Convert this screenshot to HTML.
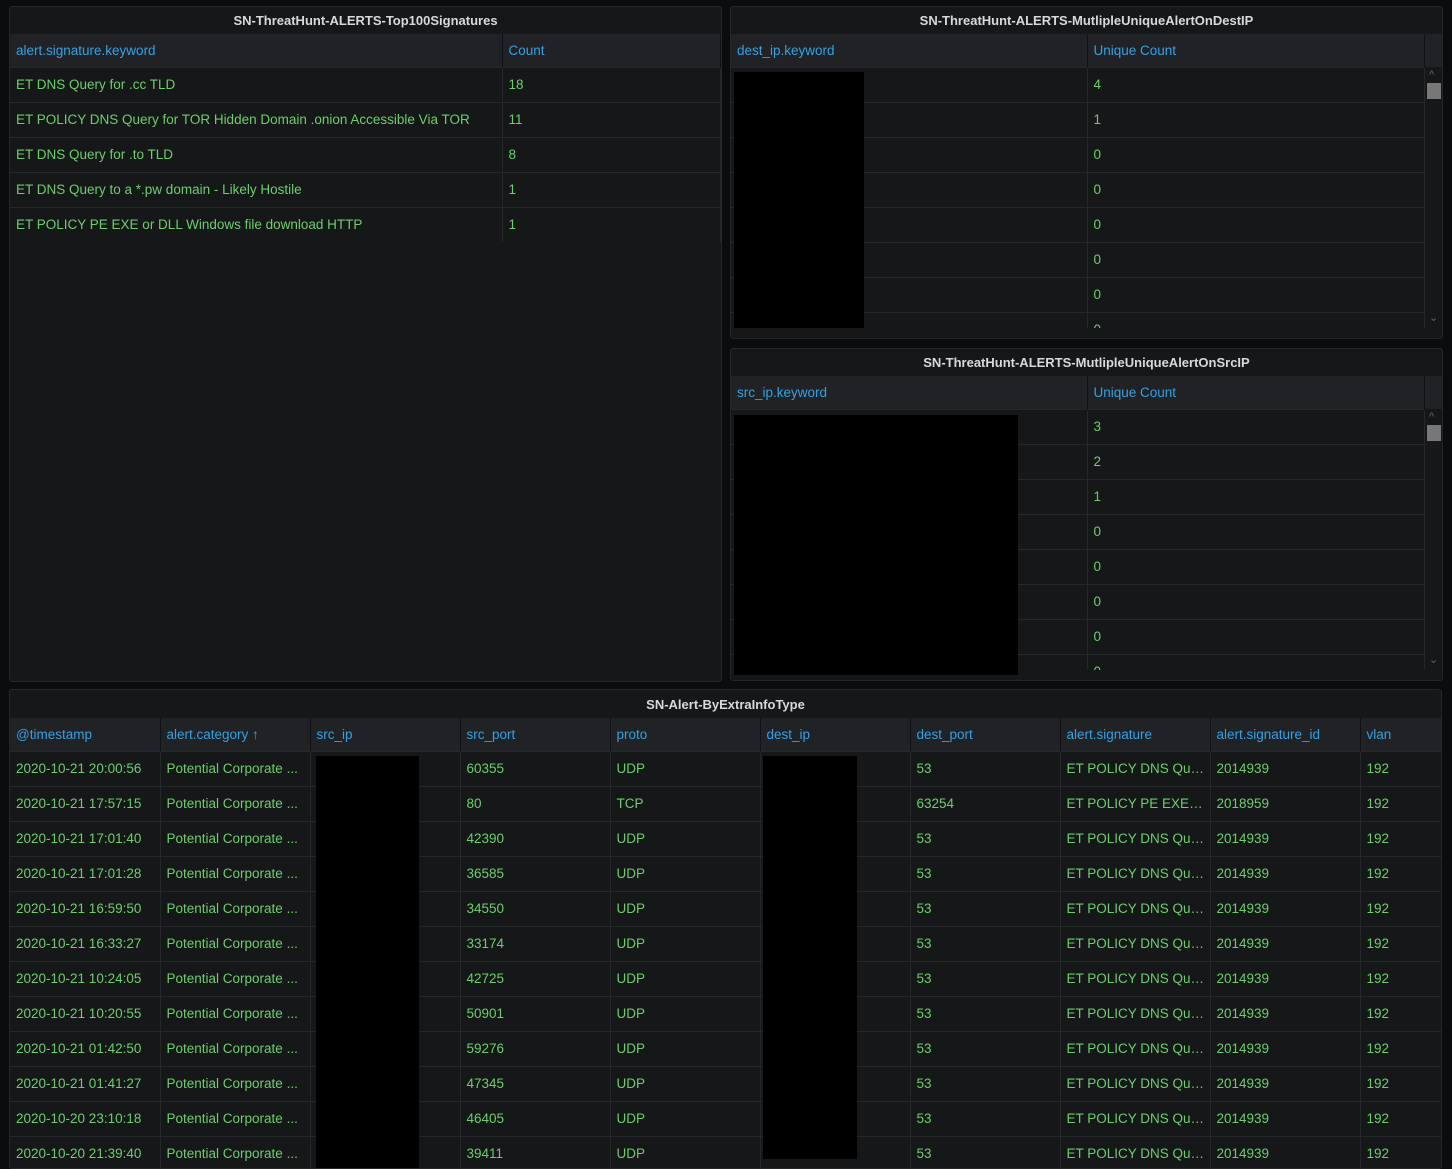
<!DOCTYPE html><html><head><style>
*{box-sizing:border-box;margin:0;padding:0}
body{width:1452px;height:1164px;background:#0b0c0e;font-family:"Liberation Sans",sans-serif;font-size:13.5px;overflow:hidden;position:relative}
.p{position:absolute;background:#181b1f;border:1px solid #25272b;border-radius:3px;overflow:hidden}
.t{height:27px;line-height:27px;text-align:center;color:#d8d9da;font-weight:bold;font-size:13px}
table{border-collapse:collapse;table-layout:fixed}
th{background:#202226;height:33px;padding-top:1px;text-align:left;font-weight:normal;color:#33a2e5;padding-left:6px;border-right:1px solid #111217}
td{height:35px;color:#6ccf6c;padding-left:6px;padding-right:4px;border-top:1px solid #25272b;border-right:1px solid #25272b;white-space:nowrap;overflow:hidden;text-overflow:ellipsis;background:#161719}
.blk{position:absolute;background:#000}
.sb{position:absolute;width:14px;background:#161719}
.up,.dn{position:absolute;color:#666;font-size:11px;left:3px}
.thumb{position:absolute;left:1px;top:14px;width:14px;height:16px;background:#777}
</style></head><body>

<div class="p" style="left:9px;top:6px;width:713px;height:676px;background:#161719">
<div class="t">SN-ThreatHunt-ALERTS-Top100Signatures</div>
<table style="width:711px"><colgroup><col style="width:492px"><col></colgroup>
<tr><th>alert.signature.keyword</th><th>Count</th></tr>
<tr><td>ET DNS Query for .cc TLD</td><td>18</td></tr>
<tr><td>ET POLICY DNS Query for TOR Hidden Domain .onion Accessible Via TOR</td><td>11</td></tr>
<tr><td>ET DNS Query for .to TLD</td><td>8</td></tr>
<tr><td>ET DNS Query to a *.pw domain - Likely Hostile</td><td>1</td></tr>
<tr><td>ET POLICY PE EXE or DLL Windows file download HTTP</td><td>1</td></tr>
</table></div>

<div class="p" style="left:730px;top:6px;width:713px;height:333px;background:#161719">
<div class="t">SN-ThreatHunt-ALERTS-MutlipleUniqueAlertOnDestIP</div>
<div style="position:absolute;left:0;top:27px;width:713px;height:33px;background:#202226"></div>
<table style="width:694px;position:relative"><colgroup><col style="width:356px"><col></colgroup>
<tr><th>dest_ip.keyword</th><th>Unique Count</th></tr>
<tr><td></td><td>4</td></tr><tr><td></td><td>1</td></tr><tr><td></td><td>0</td></tr><tr><td></td><td>0</td></tr><tr><td></td><td>0</td></tr><tr><td></td><td>0</td></tr><tr><td></td><td>0</td></tr><tr><td></td><td>0</td></tr>
</table>
<div style="position:absolute;left:0;top:321px;width:713px;height:20px;background:#161719"></div>
<div class="sb" style="left:695px;top:62px;height:260px"><span class="up">^</span><div class="thumb"></div><span class="dn" style="top:242px">⌄</span></div>
<div class="blk" style="left:3px;top:65px;width:130px;height:256px"></div>
</div>

<div class="p" style="left:730px;top:348px;width:713px;height:333px;background:#161719">
<div class="t">SN-ThreatHunt-ALERTS-MutlipleUniqueAlertOnSrcIP</div>
<div style="position:absolute;left:0;top:27px;width:713px;height:33px;background:#202226"></div>
<table style="width:694px;position:relative"><colgroup><col style="width:356px"><col></colgroup>
<tr><th>src_ip.keyword</th><th>Unique Count</th></tr>
<tr><td></td><td>3</td></tr><tr><td></td><td>2</td></tr><tr><td></td><td>1</td></tr><tr><td></td><td>0</td></tr><tr><td></td><td>0</td></tr><tr><td></td><td>0</td></tr><tr><td></td><td>0</td></tr><tr><td></td><td>0</td></tr>
</table>
<div style="position:absolute;left:0;top:321px;width:713px;height:20px;background:#161719"></div>
<div class="sb" style="left:695px;top:62px;height:260px"><span class="up">^</span><div class="thumb"></div><span class="dn" style="top:242px">⌄</span></div>
<div class="blk" style="left:3px;top:66px;width:284px;height:260px"></div>
</div>

<div class="p" style="left:9px;top:689px;width:1433px;height:480px;background:#161719">
<div class="t" style="height:28px;line-height:29px">SN-Alert-ByExtraInfoType</div>
<table style="width:1432px"><colgroup><col style="width:150px"><col style="width:150px"><col style="width:150px"><col style="width:150px"><col style="width:150px"><col style="width:150px"><col style="width:150px"><col style="width:150px"><col style="width:150px"><col></colgroup>
<tr><th>@timestamp</th><th>alert.category ↑</th><th>src_ip</th><th>src_port</th><th>proto</th><th>dest_ip</th><th>dest_port</th><th>alert.signature</th><th>alert.signature_id</th><th>vlan</th></tr>
<tr><td>2020-10-21 20:00:56</td><td>Potential Corporate ...</td><td></td><td>60355</td><td>UDP</td><td></td><td>53</td><td>ET POLICY DNS Query</td><td>2014939</td><td>192</td></tr>
<tr><td>2020-10-21 17:57:15</td><td>Potential Corporate ...</td><td></td><td>80</td><td>TCP</td><td></td><td>63254</td><td>ET POLICY PE EXE or DLL</td><td>2018959</td><td>192</td></tr>
<tr><td>2020-10-21 17:01:40</td><td>Potential Corporate ...</td><td></td><td>42390</td><td>UDP</td><td></td><td>53</td><td>ET POLICY DNS Query</td><td>2014939</td><td>192</td></tr>
<tr><td>2020-10-21 17:01:28</td><td>Potential Corporate ...</td><td></td><td>36585</td><td>UDP</td><td></td><td>53</td><td>ET POLICY DNS Query</td><td>2014939</td><td>192</td></tr>
<tr><td>2020-10-21 16:59:50</td><td>Potential Corporate ...</td><td></td><td>34550</td><td>UDP</td><td></td><td>53</td><td>ET POLICY DNS Query</td><td>2014939</td><td>192</td></tr>
<tr><td>2020-10-21 16:33:27</td><td>Potential Corporate ...</td><td></td><td>33174</td><td>UDP</td><td></td><td>53</td><td>ET POLICY DNS Query</td><td>2014939</td><td>192</td></tr>
<tr><td>2020-10-21 10:24:05</td><td>Potential Corporate ...</td><td></td><td>42725</td><td>UDP</td><td></td><td>53</td><td>ET POLICY DNS Query</td><td>2014939</td><td>192</td></tr>
<tr><td>2020-10-21 10:20:55</td><td>Potential Corporate ...</td><td></td><td>50901</td><td>UDP</td><td></td><td>53</td><td>ET POLICY DNS Query</td><td>2014939</td><td>192</td></tr>
<tr><td>2020-10-21 01:42:50</td><td>Potential Corporate ...</td><td></td><td>59276</td><td>UDP</td><td></td><td>53</td><td>ET POLICY DNS Query</td><td>2014939</td><td>192</td></tr>
<tr><td>2020-10-21 01:41:27</td><td>Potential Corporate ...</td><td></td><td>47345</td><td>UDP</td><td></td><td>53</td><td>ET POLICY DNS Query</td><td>2014939</td><td>192</td></tr>
<tr><td>2020-10-20 23:10:18</td><td>Potential Corporate ...</td><td></td><td>46405</td><td>UDP</td><td></td><td>53</td><td>ET POLICY DNS Query</td><td>2014939</td><td>192</td></tr>
<tr><td>2020-10-20 21:39:40</td><td>Potential Corporate ...</td><td></td><td>39411</td><td>UDP</td><td></td><td>53</td><td>ET POLICY DNS Query</td><td>2014939</td><td>192</td></tr>
</table>
<div class="blk" style="left:306px;top:66px;width:103px;height:420px"></div>
<div class="blk" style="left:753px;top:66px;width:94px;height:403px"></div>
</div>
</body></html>
